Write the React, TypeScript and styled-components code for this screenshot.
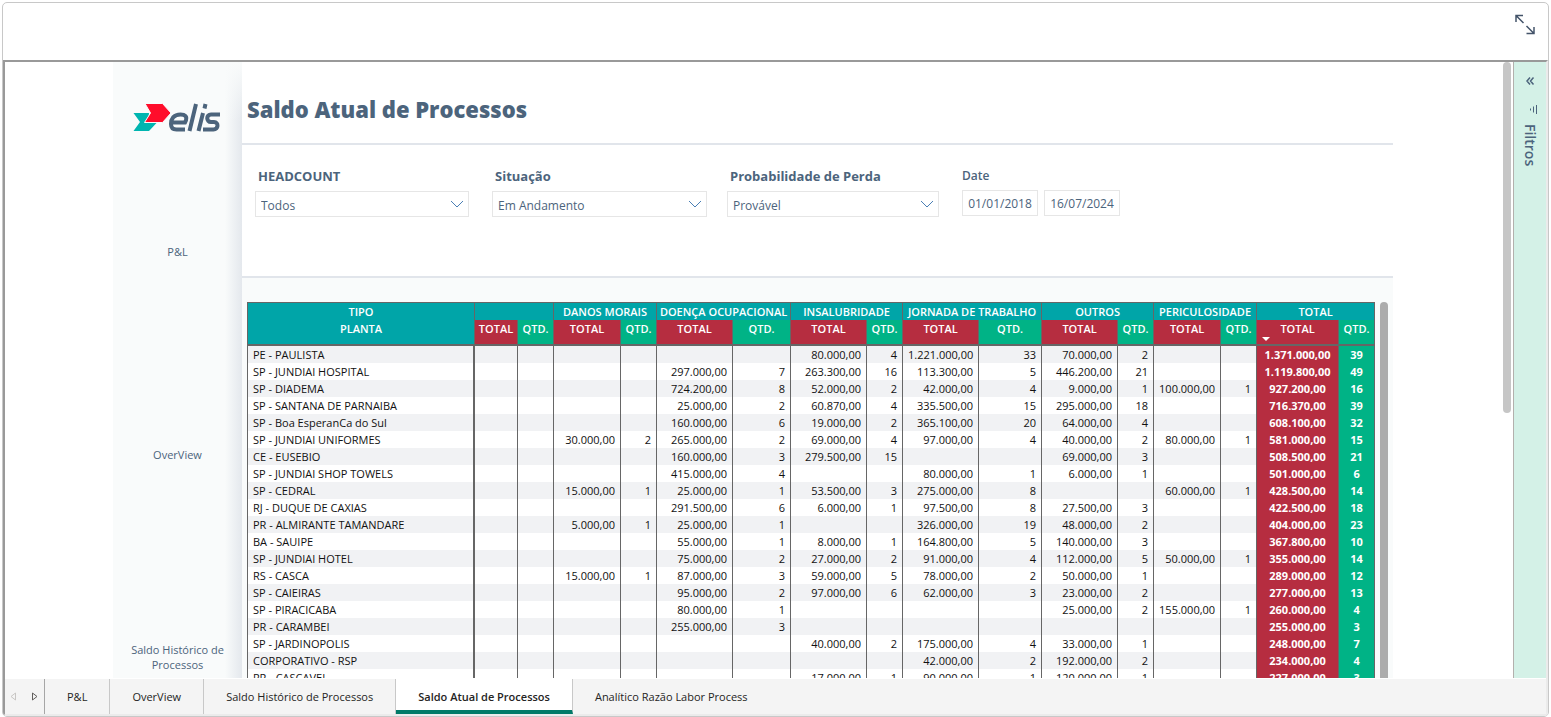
import React from 'react';
import styled, { createGlobalStyle } from 'styled-components';

const GlobalStyle = createGlobalStyle`
  *, *::before, *::after { box-sizing: border-box; }
  html, body, #root { height: 100%; }
  body {
    margin: 0;
    overflow: hidden;
    background: #fff;
    font-family: "Open Sans", "Noto Sans", sans-serif;
    color: #4c647c;
  }
  button, input, select { font: inherit; color: inherit; }
  button { cursor: pointer; background: none; border: 0; padding: 0; }
`;

const Shell = styled.div`
  height: 100vh;
  padding: 2px 2px 0;
`;

const Card = styled.main`
  display: flex;
  flex-direction: column;
  height: 100%;
  border: 1px solid #c8c8c8;
  border-radius: 5px;
  overflow: hidden;
`;

const CardHeader = styled.header`
  display: flex;
  justify-content: flex-end;
  flex: 0 0 57px;
  padding: 11px 12px 0 0;
`;

const ExpandButton = styled.button`
  width: 22px;
  height: 22px;
`;

const Frame = styled.div`
  flex: 1;
  min-height: 0;
  display: flex;
  flex-direction: column;
  border: 2px solid #ebebeb;
  border-top-color: #999;
  border-left-color: #999;
`;

const Stage = styled.div`
  flex: 1;
  min-height: 0;
  display: flex;
  overflow: hidden;
`;

const Viewport = styled.div`
  flex: 1;
  min-width: 0;
  display: flex;
  justify-content: center;
  overflow: hidden;
`;

const Canvas = styled.div`
  display: flex;
  flex: 0 1 1280px;
  min-width: 0;
`;

const Side = styled.nav`
  flex: 0 0 129px;
  display: flex;
  flex-direction: column;
  align-items: center;
  padding: 40px 10px 0;
  background:
    linear-gradient(to bottom, #f9fbfb 0, rgba(249, 251, 251, 0) 60px),
    linear-gradient(to right, rgba(228, 232, 237, 0) 112px, #e4e8ed 129px),
    #f9fbfb;
`;

const SideLink = styled.a<{ $gap: number }>`
  margin-top: ${(p) => p.$gap}px;
  width: 100px;
  font-size: 11px;
  line-height: 15px;
  text-align: center;
  text-decoration: none;
  color: #4c647c;
`;

const Report = styled.div`
  flex: 1;
  min-width: 0;
  display: flex;
  flex-direction: column;
`;

const TitleBar = styled.div`
  height: 83px;
  padding: 29px 5px 0;
  border-bottom: 2px solid #e1e5eb;
`;

const Title = styled.h1`
  margin: 0;
  font-size: 22px;
  line-height: 36px;
  font-weight: 800;
`;

const Filters = styled.div`
  display: flex;
  height: 133px;
  padding: 21px 13px 0;
  border-bottom: 2px solid #e1e5eb;
`;

const Field = styled.div<{ $width: number; $gap: number }>`
  width: ${(p) => p.$width}px;
  margin-right: ${(p) => p.$gap}px;
`;

const FieldLabel = styled.label`
  display: block;
  height: 25px;
  padding-left: 3px;
  font-size: 13px;
  line-height: 20px;
  font-weight: 700;
`;

const SelectBox = styled.div`
  display: grid;
  align-items: center;
  height: 26px;
  border: 1px solid #e6e6e6;

  > * { grid-area: 1 / 1; }
  svg { justify-self: end; margin-right: 4px; pointer-events: none; }
`;

const Select = styled.select`
  width: 100%;
  height: 24px;
  padding: 2px 5px 0;
  border: 0;
  background: transparent;
  appearance: none;
  font-size: 12px;
`;

const DateField = styled.fieldset`
  margin: 0;
  padding: 0;
  border: 0;
`;

const DateLegend = styled.legend`
  height: 24px;
  padding: 0;
  font-size: 12px;
  line-height: 20px;
  font-weight: 600;
`;

const DateRow = styled.div`
  display: flex;
  gap: 6px;
`;

const DateInput = styled.input`
  width: 76px;
  height: 26px;
  padding: 0;
  border: 1px solid #e6e6e6;
  text-align: center;
  font-size: 12px;
`;

const TableArea = styled.div`
  flex: 1;
  display: flex;
  align-items: flex-start;
  gap: 5px;
  min-height: 0;
  overflow: hidden;
  padding: 24px 5px 0;
  background: #f9fbfb;
`;

const TableScroll = styled.div`
  width: 8px;
  height: 400px;
  border-radius: 4px 4px 0 0;
  background: #acacac;
`;

const Table = styled.table`
  width: 1128px;
  table-layout: fixed;
  border-collapse: separate;
  border-spacing: 0;
  border-top: 1px solid #666;
  border-left: 1px solid #666;
  background: #fff;
  font-size: 11px;
  line-height: 16px;
  color: #111;
`;

const TEAL = '#00a5a8';
const RED = '#b62d40';
const GREEN = '#00b386';

const GroupHead = styled.th`
  height: 17px;
  padding: 0;
  border-right: 1px solid #666;
  background: ${TEAL};
  color: #fff;
  font-size: 11px;
  font-weight: 600;
  white-space: nowrap;
`;

const SubHead = styled.th<{ $bg: string }>`
  height: 26px;
  padding: 1px 0 0;
  vertical-align: top;
  border-right: 1px solid #666;
  border-bottom: 2px solid #666;
  background: ${(p) => p.$bg};
  color: #fff;
  font-size: 11px;
  font-weight: 600;
  white-space: nowrap;
`;

const SortMark = styled.svg`
  position: absolute;
  left: 5px;
  bottom: -4px;
`;

const SortHolder = styled.div`
  position: relative;
`;

const Row = styled.tr`
  &:nth-child(odd) { background: #f1f2f4; }
`;

const Plant = styled.th`
  height: 17px;
  padding: 0 5px;
  border-right: 2px solid #666;
  font-weight: 400;
  text-align: left;
  white-space: nowrap;
`;

const Cell = styled.td`
  height: 17px;
  padding: 0 5px;
  border-right: 1px solid #666;
  text-align: right;
  white-space: nowrap;
`;

const SumCell = styled.td<{ $bg: string }>`
  height: 17px;
  padding: 0;
  border-right: 1px solid #666;
  background: ${(p) => p.$bg};
  color: #fff;
  font-weight: 700;
  text-align: center;
`;

const PageScroll = styled.div`
  flex: 0 0 12px;
  padding-left: 2px;
`;

const PageThumb = styled.div`
  width: 8px;
  height: 351px;
  border-radius: 4px;
  background: #c6c6c6;
`;

const FilterPane = styled.aside`
  flex: 0 0 33px;
  display: flex;
  flex-direction: column;
  align-items: center;
  padding-top: 14px;
  border-left: 1px solid #b3b0ad;
  background: #d4f1e7;
`;

const PaneButton = styled.button`
  display: flex;
  flex-direction: column;
  align-items: center;
`;

const PaneTitle = styled.span`
  margin-top: 8px;
  writing-mode: vertical-rl;
  font-size: 14px;
  line-height: 20px;
  font-weight: 600;
`;

const TabBar = styled.nav`
  flex: 0 0 36px;
  display: flex;
  border-top: 1px solid #fff;
  background: #f4f4f4;
`;

const Pager = styled.div`
  display: flex;
  align-items: center;
  justify-content: space-between;
  width: 40px;
  padding: 0 6px 0 5px;
  border-right: 1px solid #a6a6a6;
`;

const PagerButton = styled.button`
  display: flex;
`;

const Tab = styled.button<{ $active?: boolean }>`
  padding: ${(p) => (p.$active ? '4px 22px 0' : '0 22px')};
  border-right: 1px solid #c8c8c8;
  border-bottom: ${(p) => (p.$active ? '4px solid #007a68' : '0')};
  background: ${(p) => (p.$active ? '#fff' : 'transparent')};
  color: #252423;
  font-size: 11px;
  line-height: 16px;
  font-weight: ${(p) => (p.$active ? 600 : 400)};
  white-space: nowrap;

  &:last-child { border-right: 0; }
`;

const groups = ['', 'DANOS MORAIS', 'DOENÇA OCUPACIONAL', 'INSALUBRIDADE', 'JORNADA DE TRABALHO', 'OUTROS', 'PERICULOSIDADE', 'TOTAL'];
const widths = [227, 43, 36, 67, 36, 76, 58, 76, 36, 76, 63, 76, 36, 67, 36, 82, 36];

type Pair = [string, number] | null;
type Line = { plant: string; values: Pair[]; total: [string, number] };

// values: danos morais, doença ocupacional, insalubridade, jornada, outros, periculosidade
const lines: Line[] = [
  { plant: 'PE - PAULISTA', values: [null, null, ['80.000,00', 4], ['1.221.000,00', 33], ['70.000,00', 2], null], total: ['1.371.000,00', 39] },
  { plant: 'SP - JUNDIAI HOSPITAL', values: [null, ['297.000,00', 7], ['263.300,00', 16], ['113.300,00', 5], ['446.200,00', 21], null], total: ['1.119.800,00', 49] },
  { plant: 'SP - DIADEMA', values: [null, ['724.200,00', 8], ['52.000,00', 2], ['42.000,00', 4], ['9.000,00', 1], ['100.000,00', 1]], total: ['927.200,00', 16] },
  { plant: 'SP - SANTANA DE PARNAIBA', values: [null, ['25.000,00', 2], ['60.870,00', 4], ['335.500,00', 15], ['295.000,00', 18], null], total: ['716.370,00', 39] },
  { plant: 'SP - Boa EsperanCa do Sul', values: [null, ['160.000,00', 6], ['19.000,00', 2], ['365.100,00', 20], ['64.000,00', 4], null], total: ['608.100,00', 32] },
  { plant: 'SP - JUNDIAI UNIFORMES', values: [['30.000,00', 2], ['265.000,00', 2], ['69.000,00', 4], ['97.000,00', 4], ['40.000,00', 2], ['80.000,00', 1]], total: ['581.000,00', 15] },
  { plant: 'CE - EUSEBIO', values: [null, ['160.000,00', 3], ['279.500,00', 15], null, ['69.000,00', 3], null], total: ['508.500,00', 21] },
  { plant: 'SP - JUNDIAI SHOP TOWELS', values: [null, ['415.000,00', 4], null, ['80.000,00', 1], ['6.000,00', 1], null], total: ['501.000,00', 6] },
  { plant: 'SP - CEDRAL', values: [['15.000,00', 1], ['25.000,00', 1], ['53.500,00', 3], ['275.000,00', 8], null, ['60.000,00', 1]], total: ['428.500,00', 14] },
  { plant: 'RJ - DUQUE DE CAXIAS', values: [null, ['291.500,00', 6], ['6.000,00', 1], ['97.500,00', 8], ['27.500,00', 3], null], total: ['422.500,00', 18] },
  { plant: 'PR - ALMIRANTE TAMANDARE', values: [['5.000,00', 1], ['25.000,00', 1], null, ['326.000,00', 19], ['48.000,00', 2], null], total: ['404.000,00', 23] },
  { plant: 'BA - SAUIPE', values: [null, ['55.000,00', 1], ['8.000,00', 1], ['164.800,00', 5], ['140.000,00', 3], null], total: ['367.800,00', 10] },
  { plant: 'SP - JUNDIAI HOTEL', values: [null, ['75.000,00', 2], ['27.000,00', 2], ['91.000,00', 4], ['112.000,00', 5], ['50.000,00', 1]], total: ['355.000,00', 14] },
  { plant: 'RS - CASCA', values: [['15.000,00', 1], ['87.000,00', 3], ['59.000,00', 5], ['78.000,00', 2], ['50.000,00', 1], null], total: ['289.000,00', 12] },
  { plant: 'SP - CAIEIRAS', values: [null, ['95.000,00', 2], ['97.000,00', 6], ['62.000,00', 3], ['23.000,00', 2], null], total: ['277.000,00', 13] },
  { plant: 'SP - PIRACICABA', values: [null, ['80.000,00', 1], null, null, ['25.000,00', 2], ['155.000,00', 1]], total: ['260.000,00', 4] },
  { plant: 'PR - CARAMBEI', values: [null, ['255.000,00', 3], null, null, null, null], total: ['255.000,00', 3] },
  { plant: 'SP - JARDINOPOLIS', values: [null, null, ['40.000,00', 2], ['175.000,00', 4], ['33.000,00', 1], null], total: ['248.000,00', 7] },
  { plant: 'CORPORATIVO - RSP', values: [null, null, null, ['42.000,00', 2], ['192.000,00', 2], null], total: ['234.000,00', 4] },
  { plant: 'PR - CASCAVEL', values: [null, null, ['17.000,00', 1], ['90.000,00', 1], ['120.000,00', 1], null], total: ['227.000,00', 3] },
];

const Chevron = () => (
  <svg width="14" height="8" viewBox="0 0 14 8" fill="none" stroke="#4a7fb5" aria-hidden="true">
    <path d="M1 1l6 6 6-6" />
  </svg>
);

const Logo = () => (
  <svg width="90" height="30" viewBox="0 0 90 30" role="img" aria-label="elis">
    <path fill="#00b5b0" d="M.5 11H16l-1 9.500h9L16 29H.5L7 20z" />
    <path fill="#ff0d2b" stroke="#f9fbfb" d="M12 1.500h17.500L38 11l-8.500 9.500H11.500L17.500 11z" />
    <g fill="none" stroke="#4c647c" strokeWidth="4">
      <path d="M37.500 20.500H52c3.500-6.500-.5-8-4.500-8-7 0-9.500 4.500-9.500 9.500 0 4 2 5.500 5.500 5.500h8.500" />
      <path d="M63 2l-6.500 27M70 11l-4.500 18M72.500 2l-1 4.500M87 12.500h-9c-5 0-5 7.500 0 7.500h3c5 0 4.500 7.500-.5 7.500H70" />
    </g>
  </svg>
);

const FilterSelect = ({ id, label, value, width, gap }: { id: string; label: string; value: string; width: number; gap: number }) => (
  <Field $width={width} $gap={gap}>
    <FieldLabel htmlFor={id}>{label}</FieldLabel>
    <SelectBox>
      <Select id={id} defaultValue={value}>
        <option>{value}</option>
      </Select>
      <Chevron />
    </SelectBox>
  </Field>
);

const PlantTable = () => (
  <Table>
    <colgroup>
      {widths.map((w, i) => <col key={i} width={w} />)}
    </colgroup>
    <thead>
      <tr>
        <GroupHead scope="col">TIPO</GroupHead>
        {groups.map((g) => <GroupHead key={g || 'none'} colSpan={2} scope="colgroup">{g}</GroupHead>)}
      </tr>
      <tr>
        <SubHead $bg={TEAL} scope="col">PLANTA</SubHead>
        {groups.map((g, i) => (
          <React.Fragment key={g || 'none'}>
            <SubHead $bg={RED} scope="col">
              <SortHolder>
                TOTAL
                {i === groups.length - 1 && (
                  <SortMark width="8" height="4" viewBox="0 0 8 4" aria-hidden="true">
                    <path d="M0 0h8L4 4z" fill="#fff" />
                  </SortMark>
                )}
              </SortHolder>
            </SubHead>
            <SubHead $bg={GREEN} scope="col">QTD.</SubHead>
          </React.Fragment>
        ))}
      </tr>
    </thead>
    <tbody>
      {lines.map((line) => (
        <Row key={line.plant}>
          <Plant scope="row">{line.plant}</Plant>
          {[null, ...line.values].map((v, i) => (
            <React.Fragment key={i}>
              <Cell>{v?.[0]}</Cell>
              <Cell>{v?.[1]}</Cell>
            </React.Fragment>
          ))}
          <SumCell $bg={RED}>{line.total[0]}</SumCell>
          <SumCell $bg={GREEN}>{line.total[1]}</SumCell>
        </Row>
      ))}
    </tbody>
  </Table>
);

export default function App() {
  return (
    <Shell>
      <GlobalStyle />
      <Card>
        <CardHeader>
          <ExpandButton aria-label="Expandir">
            <svg width="22" height="22" viewBox="0 0 22 22" fill="none" stroke="#44546a" strokeWidth="1.500">
              <path d="M9 1.500H2V8M2 1.500l7.500 7.500M12.500 12l7.500 7.500M20 13v6.500h-7.500" />
            </svg>
          </ExpandButton>
        </CardHeader>
        <Frame>
          <Stage>
            <Viewport>
              <Canvas>
                <Side>
                  <Logo />
                  <SideLink href="#pl" $gap={112}>P&amp;L</SideLink>
                  <SideLink href="#overview" $gap={188}>OverView</SideLink>
                  <SideLink href="#historico" $gap={180}>Saldo Histórico de Processos</SideLink>
                </Side>
                <Report>
                  <TitleBar>
                    <Title>Saldo Atual de Processos</Title>
                  </TitleBar>
                  <Filters>
                    <FilterSelect id="headcount" label="HEADCOUNT" value="Todos" width={214} gap={23} />
                    <FilterSelect id="situacao" label="Situação" value="Em Andamento" width={215} gap={20} />
                    <FilterSelect id="probabilidade" label="Probabilidade de Perda" value="Provável" width={212} gap={23} />
                    <DateField>
                      <DateLegend>Date</DateLegend>
                      <DateRow>
                        <DateInput aria-label="Data inicial" defaultValue="01/01/2018" />
                        <DateInput aria-label="Data final" defaultValue="16/07/2024" />
                      </DateRow>
                    </DateField>
                  </Filters>
                  <TableArea>
                    <PlantTable />
                    <TableScroll />
                  </TableArea>
                </Report>
              </Canvas>
            </Viewport>
            <PageScroll>
              <PageThumb />
            </PageScroll>
            <FilterPane>
              <PaneButton aria-label="Expandir filtros">
                <svg width="10" height="10" viewBox="0 0 10 10" fill="none" stroke="#4c647c" strokeWidth="1.500">
                  <path d="M5 1.500L2 5l3 3.500M8.500 1.500L5.500 5l3 3.500" />
                </svg>
              </PaneButton>
              <PaneButton>
                <svg width="14" height="30" viewBox="0 0 14 30" fill="none" stroke="#4c647c" aria-hidden="true">
                  <path d="M13.500 19v9M10.500 20.500v6M7.500 22.500v2" />
                </svg>
                <PaneTitle>Filtros</PaneTitle>
              </PaneButton>
            </FilterPane>
          </Stage>
          <TabBar>
            <Pager>
              <PagerButton aria-label="Anterior">
                <svg width="7" height="9" viewBox="0 0 7 9" fill="none" stroke="#c8c6c4"><path d="M5.500 1v7L1 4.500z" /></svg>
              </PagerButton>
              <PagerButton aria-label="Próxima">
                <svg width="7" height="9" viewBox="0 0 7 9" fill="none" stroke="#605e5c"><path d="M1.500 1v7L6 4.500z" /></svg>
              </PagerButton>
            </Pager>
            <Tab>P&amp;L</Tab>
            <Tab>OverView</Tab>
            <Tab>Saldo Histórico de Processos</Tab>
            <Tab $active>Saldo Atual de Processos</Tab>
            <Tab>Analítico Razão Labor Process</Tab>
          </TabBar>
        </Frame>
      </Card>
    </Shell>
  );
}
